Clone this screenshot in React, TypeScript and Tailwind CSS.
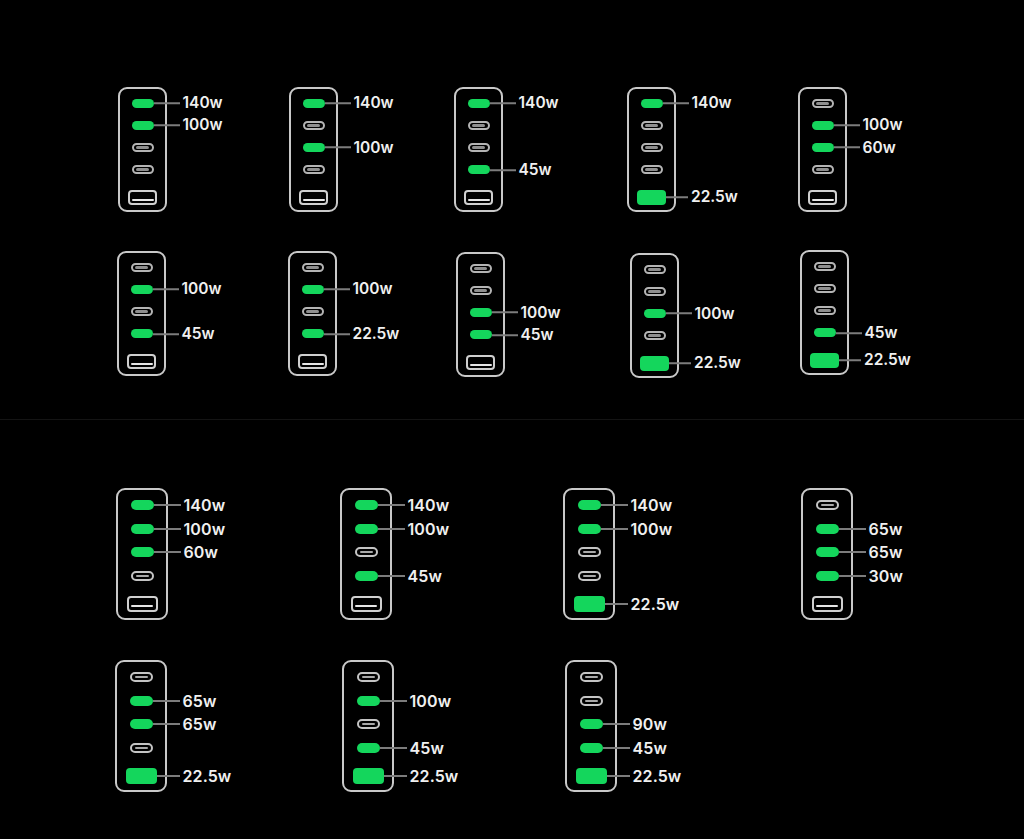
import React from "react";

type Size = "sm" | "lg";
type Slots = [string?, string?, string?, string?, string?];

function CPort({ size, label }: { size: Size; label?: string }) {
  const lg = size === "lg";
  if (label) {
    return (
      <div className={lg ? "relative h-[10px] w-[23px] rounded-[5px] bg-[#14d65c]" : "relative h-[9px] w-[22px] rounded-[5px] bg-[#14d65c]"}>
        <Leader size={size} label={label} />
      </div>
    );
  }
  return (
    <div className={lg ? "flex h-[10px] w-[23px] items-center justify-center rounded-[5px] border-2 border-[#c4c4c4]" : "flex h-[9px] w-[22px] items-center justify-center rounded-[5px] border-2 border-[#b4b4b4]"}>
      <div className={lg ? "h-[2px] w-[13px] rounded-full bg-[#a8a8a8]" : "h-[3px] w-[13px] rounded-full bg-[#8f8f8f]"} />
    </div>
  );
}

function APort({ size, label }: { size: Size; label?: string }) {
  const lg = size === "lg";
  if (label) {
    return (
      <div className={lg ? "relative mt-[1px] h-[16px] w-[31px] rounded-[4px] bg-[#14d65c]" : "relative mt-[2px] h-[15px] w-[29px] rounded-[4px] bg-[#14d65c]"}>
        <Leader size={size} label={label} usb />
      </div>
    );
  }
  return (
    <div className={lg ? "mt-[1px] flex h-[16px] w-[31px] items-end justify-center rounded-[4px] border-2 border-[#d0d0d0] pb-[3px]" : "mt-[2px] flex h-[15px] w-[29px] items-end justify-center rounded-[4px] border-2 border-[#cfcfcf] pb-[2px]"}>
      <div className="h-[2px] w-[22px] rounded-full bg-[#e6e6e6]" />
    </div>
  );
}

function Leader({ size, label, usb }: { size: Size; label: string; usb?: boolean }) {
  const lg = size === "lg";
  const w = lg ? (usb ? "w-[23px]" : "w-[27px]") : usb ? "w-[22px]" : "w-[26px]";
  return (
    <div className="absolute left-full top-1/2 flex -translate-y-1/2 items-center">
      <div className={`h-[2px] ${w} bg-[#7c7c7c]`} />
      <span
        className={`ml-[3px] whitespace-nowrap font-['Inter',sans-serif] font-semibold leading-none text-[#f0f0f0] ${
          lg ? "text-[16px] tracking-[0.1px]" : "text-[15.5px]"
        }`}
      >
        {label}
      </span>
    </div>
  );
}

function Charger({ size, slots, className }: { size: Size; slots: Slots; className: string }) {
  const lg = size === "lg";
  return (
    <div
      className={`${className} flex shrink-0 flex-col items-center rounded-[9px] border-2 border-[#c9c9c9] ${
        lg ? "h-[132px] w-[52px] gap-[13.7px] pt-[10px]" : "h-[125px] w-[49px] gap-[13.3px] pt-[9.5px]"
      }`}
    >
      <CPort size={size} label={slots[0]} />
      <CPort size={size} label={slots[1]} />
      <CPort size={size} label={slots[2]} />
      <CPort size={size} label={slots[3]} />
      <APort size={size} label={slots[4]} />
    </div>
  );
}

const _ = undefined;

export default function App() {
  return (
    <div className="h-[839px] w-[1024px] overflow-hidden bg-black">
      <section className="h-[420px] border-b border-[#141414] pt-[87px]">
        <div className="flex items-start">
          <Charger size="sm" className="ml-[118px]" slots={["140w", "100w"]} />
          <Charger size="sm" className="ml-[122px]" slots={["140w", _, "100w"]} />
          <Charger size="sm" className="ml-[116px]" slots={["140w", _, _, "45w"]} />
          <Charger size="sm" className="ml-[124px]" slots={["140w", _, _, _, "22.5w"]} />
          <Charger size="sm" className="ml-[122px]" slots={[_, "100w", "60w"]} />
        </div>
        <div className="mt-[38px] flex items-start">
          <Charger size="sm" className="ml-[117px] mt-[1px]" slots={[_, "100w", _, "45w"]} />
          <Charger size="sm" className="ml-[122px] mt-[1px]" slots={[_, "100w", _, "22.5w"]} />
          <Charger size="sm" className="ml-[119px] mt-[2px]" slots={[_, _, "100w", "45w"]} />
          <Charger size="sm" className="ml-[125px] mt-[3px]" slots={[_, _, "100w", _, "22.5w"]} />
          <Charger size="sm" className="ml-[121px]" slots={[_, _, _, "45w", "22.5w"]} />
        </div>
      </section>
      <section className="pt-[68px]">
        <div className="flex items-start">
          <Charger size="lg" className="ml-[116px]" slots={["140w", "100w", "60w"]} />
          <Charger size="lg" className="ml-[172px]" slots={["140w", "100w", _, "45w"]} />
          <Charger size="lg" className="ml-[171px]" slots={["140w", "100w", _, _, "22.5w"]} />
          <Charger size="lg" className="ml-[186px]" slots={[_, "65w", "65w", "30w"]} />
        </div>
        <div className="mt-[40px] flex items-start">
          <Charger size="lg" className="ml-[115px]" slots={[_, "65w", "65w", _, "22.5w"]} />
          <Charger size="lg" className="ml-[175px]" slots={[_, "100w", _, "45w", "22.5w"]} />
          <Charger size="lg" className="ml-[171px]" slots={[_, _, "90w", "45w", "22.5w"]} />
        </div>
      </section>
    </div>
  );
}
